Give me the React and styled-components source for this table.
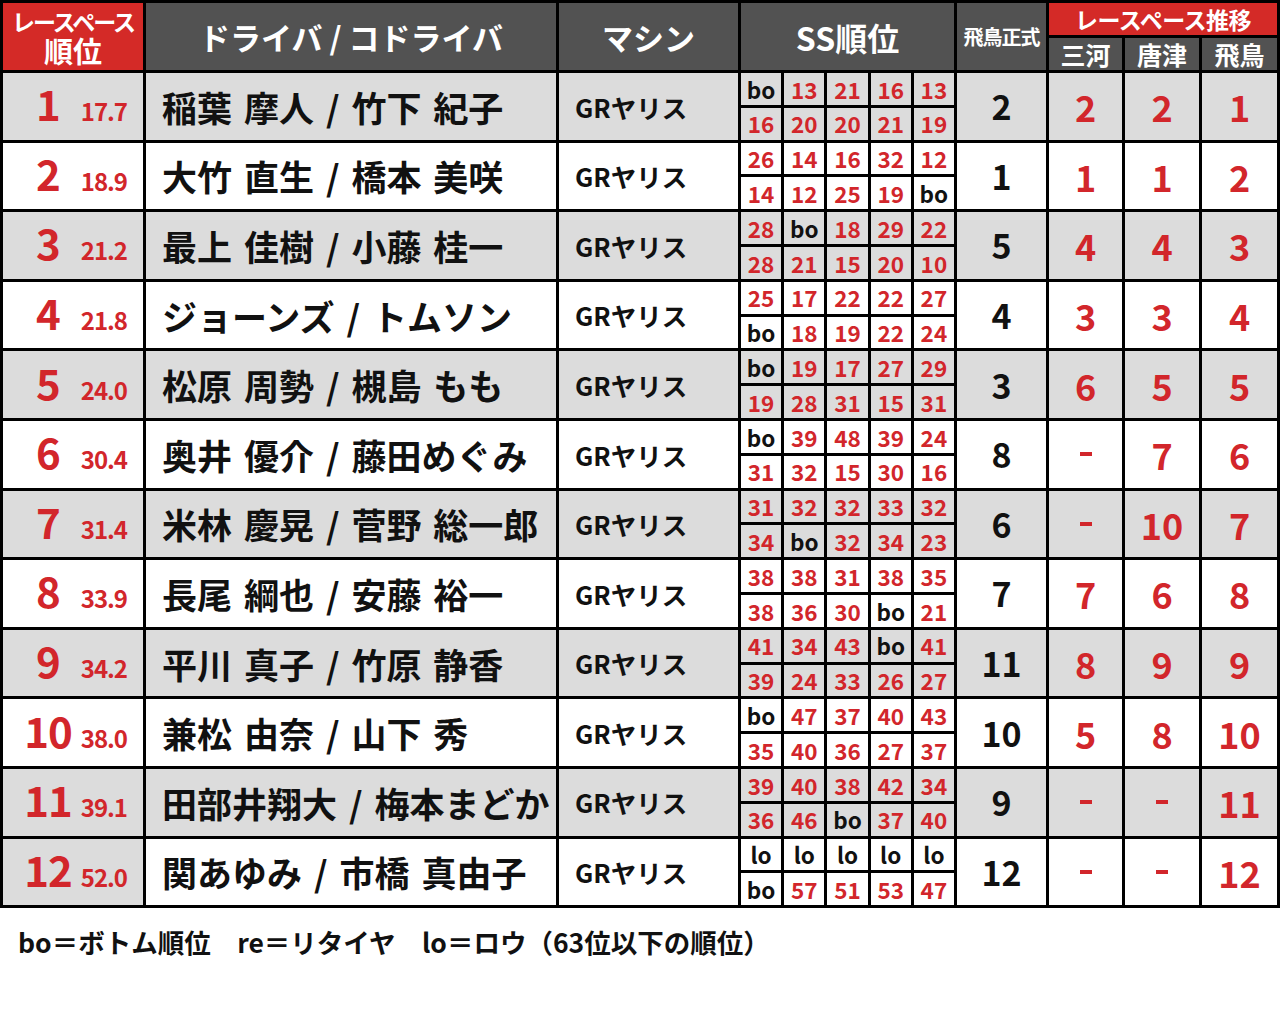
import React from "react";
import styled, { createGlobalStyle } from "styled-components";

const Global = createGlobalStyle`
  html, body { margin: 0; padding: 0; background: #fff; }
  body { font-family: "Noto Sans CJK JP", "Noto Sans", sans-serif; }
`;

const COLS = "140px 410px 179px 213px 89px 73px 74px 75px";
const RED = "#d2262b";
const HEAD = "#525252";
const SHADE = "#dcdcdc";

const Page = styled.div`
  width: 1280px;
  font-family: "Noto Sans CJK JP", "Noto Sans", sans-serif;
  font-weight: 700;
`;

const Table = styled.div`
  display: flex;
  flex-direction: column;
  gap: 3px;
  padding: 3px;
  background: #000;
`;

const HeaderRow = styled.div`
  display: grid;
  grid-template-columns: ${COLS};
  grid-template-rows: 32px 32px;
  gap: 3px;
`;

const HeadCell = styled.div`
  grid-row: ${(p) => p.$row || "1 / span 2"};
  grid-column: ${(p) => p.$col || "auto"};
  background: ${(p) => (p.$red ? "#d42a27" : HEAD)};
  color: #fff;
  display: flex;
  flex-direction: column;
  align-items: center;
  justify-content: center;
  font-size: ${(p) => p.$size || 30}px;
  letter-spacing: ${(p) => p.$ls || 0}px;
  line-height: 1;
  white-space: pre;
`;

const RankHeadLine = styled.span`
  display: block;
  font-size: ${(p) => p.$size}px;
  letter-spacing: ${(p) => p.$ls || 0}px;
  line-height: ${(p) => p.$h}px;
`;

const BodyRow = styled.div`
  display: grid;
  grid-template-columns: ${COLS};
  height: 66.6px;
  gap: 3px;
`;

const Cell = styled.div`
  background: ${(p) => (p.$shade ? SHADE : "#fff")};
  display: flex;
  align-items: center;
  justify-content: ${(p) => p.$justify || "center"};
  padding: ${(p) => p.$pad || "0"};
  color: ${(p) => (p.$red ? RED : "#111")};
  font-size: ${(p) => p.$size || 36}px;
  white-space: nowrap;
  line-height: 1;
`;

const RankInner = styled.div`
  display: flex;
  align-items: baseline;
  width: 100%;
  padding: 0 16px 0 17px;
  box-sizing: border-box;
  margin-top: -6px;
`;

const RankNum = styled.span`
  width: 56px;
  text-align: center;
  font-size: 42px;
  color: ${RED};
  letter-spacing: -1px;
`;

const Ratio = styled.span`
  flex: 1;
  text-align: right;
  font-size: 24px;
  letter-spacing: -1px;
  color: ${RED};
`;

const Name = styled.span`
  font-size: 35px;
  color: #111;
  word-spacing: 4px;
`;

const Machine = styled.span`
  font-size: 25.5px;
  color: #111;
`;

const SSGrid = styled.div`
  display: grid;
  grid-template-columns: repeat(5, 1fr);
  grid-template-rows: 1fr 1fr;
  gap: 3px;
  background: #000;
`;

const SSCell = styled.div`
  background: ${(p) => (p.$shade ? SHADE : "#fff")};
  color: ${(p) => (p.$black ? "#111" : RED)};
  font-size: 22.5px;
  display: flex;
  align-items: center;
  justify-content: center;
  line-height: 1;
`;

const Dash = styled.span`
  display: block;
  width: 12px;
  height: 4px;
  background: ${RED};
`;

const Footer = styled.div`
  padding: 21px 0 0 18px;
  font-size: 26.5px;
  line-height: 1;
  color: #111;
  font-weight: 700;
  white-space: pre;
`;

const rows = [
  ["1", "17.7", "稲葉 摩人 / 竹下 紀子", ["bo", "13", "21", "16", "13", "16", "20", "20", "21", "19"], "2", ["2", "2", "1"]],
  ["2", "18.9", "大竹 直生 / 橋本 美咲", ["26", "14", "16", "32", "12", "14", "12", "25", "19", "bo"], "1", ["1", "1", "2"]],
  ["3", "21.2", "最上 佳樹 / 小藤 桂一", ["28", "bo", "18", "29", "22", "28", "21", "15", "20", "10"], "5", ["4", "4", "3"]],
  ["4", "21.8", "ジョーンズ / トムソン", ["25", "17", "22", "22", "27", "bo", "18", "19", "22", "24"], "4", ["3", "3", "4"]],
  ["5", "24.0", "松原 周勢 / 槻島 もも", ["bo", "19", "17", "27", "29", "19", "28", "31", "15", "31"], "3", ["6", "5", "5"]],
  ["6", "30.4", "奥井 優介 / 藤田めぐみ", ["bo", "39", "48", "39", "24", "31", "32", "15", "30", "16"], "8", ["-", "7", "6"]],
  ["7", "31.4", "米林 慶晃 / 菅野 総一郎", ["31", "32", "32", "33", "32", "34", "bo", "32", "34", "23"], "6", ["-", "10", "7"]],
  ["8", "33.9", "長尾 綱也 / 安藤 裕一", ["38", "38", "31", "38", "35", "38", "36", "30", "bo", "21"], "7", ["7", "6", "8"]],
  ["9", "34.2", "平川 真子 / 竹原 静香", ["41", "34", "43", "bo", "41", "39", "24", "33", "26", "27"], "11", ["8", "9", "9"]],
  ["10", "38.0", "兼松 由奈 / 山下 秀", ["bo", "47", "37", "40", "43", "35", "40", "36", "27", "37"], "10", ["5", "8", "10"]],
  ["11", "39.1", "田部井翔大 / 梅本まどか", ["39", "40", "38", "42", "34", "36", "46", "bo", "37", "40"], "9", ["-", "-", "11"]],
  ["12", "52.0", "関あゆみ / 市橋 真由子", ["lo", "lo", "lo", "lo", "lo", "bo", "57", "51", "53", "47"], "12", ["-", "-", "12"]],
];

export default function App() {
  return (
    <Page>
      <Global />
      <Table>
        <HeaderRow>
          <HeadCell $red>
            <RankHeadLine $size={23} $ls={-2} $h={28}>レースペース</RankHeadLine>
            <RankHeadLine $size={29} $h={31}>順位</RankHeadLine>
          </HeadCell>
          <HeadCell $size={31}>{"ドライバ / コドライバ"}</HeadCell>
          <HeadCell $size={31}>マシン</HeadCell>
          <HeadCell $size={32}>SS順位</HeadCell>
          <HeadCell $size={20} $ls={-1}>飛鳥正式</HeadCell>
          <HeadCell $red $row="1" $col="6 / span 3" $size={23} $ls={-0.5}>レースペース推移</HeadCell>
          <HeadCell $row="2" $size={25}>三河</HeadCell>
          <HeadCell $row="2" $size={25}>唐津</HeadCell>
          <HeadCell $row="2" $size={25}>飛鳥</HeadCell>
        </HeaderRow>
        {rows.map(([rank, ratio, name, ss, official, pace], i) => {
          const shade = i % 2 === 0;
          return (
            <BodyRow key={rank}>
              <Cell $shade={shade || i === 11}>
                <RankInner>
                  <RankNum>{rank}</RankNum>
                  <Ratio>{ratio}</Ratio>
                </RankInner>
              </Cell>
              <Cell $shade={shade} $justify="flex-start" $pad="0 0 0 16px">
                <Name>{name}</Name>
              </Cell>
              <Cell $shade={shade} $justify="flex-start" $pad="0 0 0 16px">
                <Machine>GRヤリス</Machine>
              </Cell>
              <SSGrid>
                {ss.map((v, j) => (
                  <SSCell key={j} $shade={shade} $black={v === "bo" || v === "lo"}>
                    {v}
                  </SSCell>
                ))}
              </SSGrid>
              <Cell $shade={shade} $size={34}>{official}</Cell>
              {pace.map((v, j) => (
                <Cell key={j} $shade={shade} $red $size={36}>
                  {v === "-" ? <Dash /> : v}
                </Cell>
              ))}
            </BodyRow>
          );
        })}
      </Table>
      <Footer>{"bo＝ボトム順位　re＝リタイヤ　lo＝ロウ（63位以下の順位）"}</Footer>
    </Page>
  );
}
